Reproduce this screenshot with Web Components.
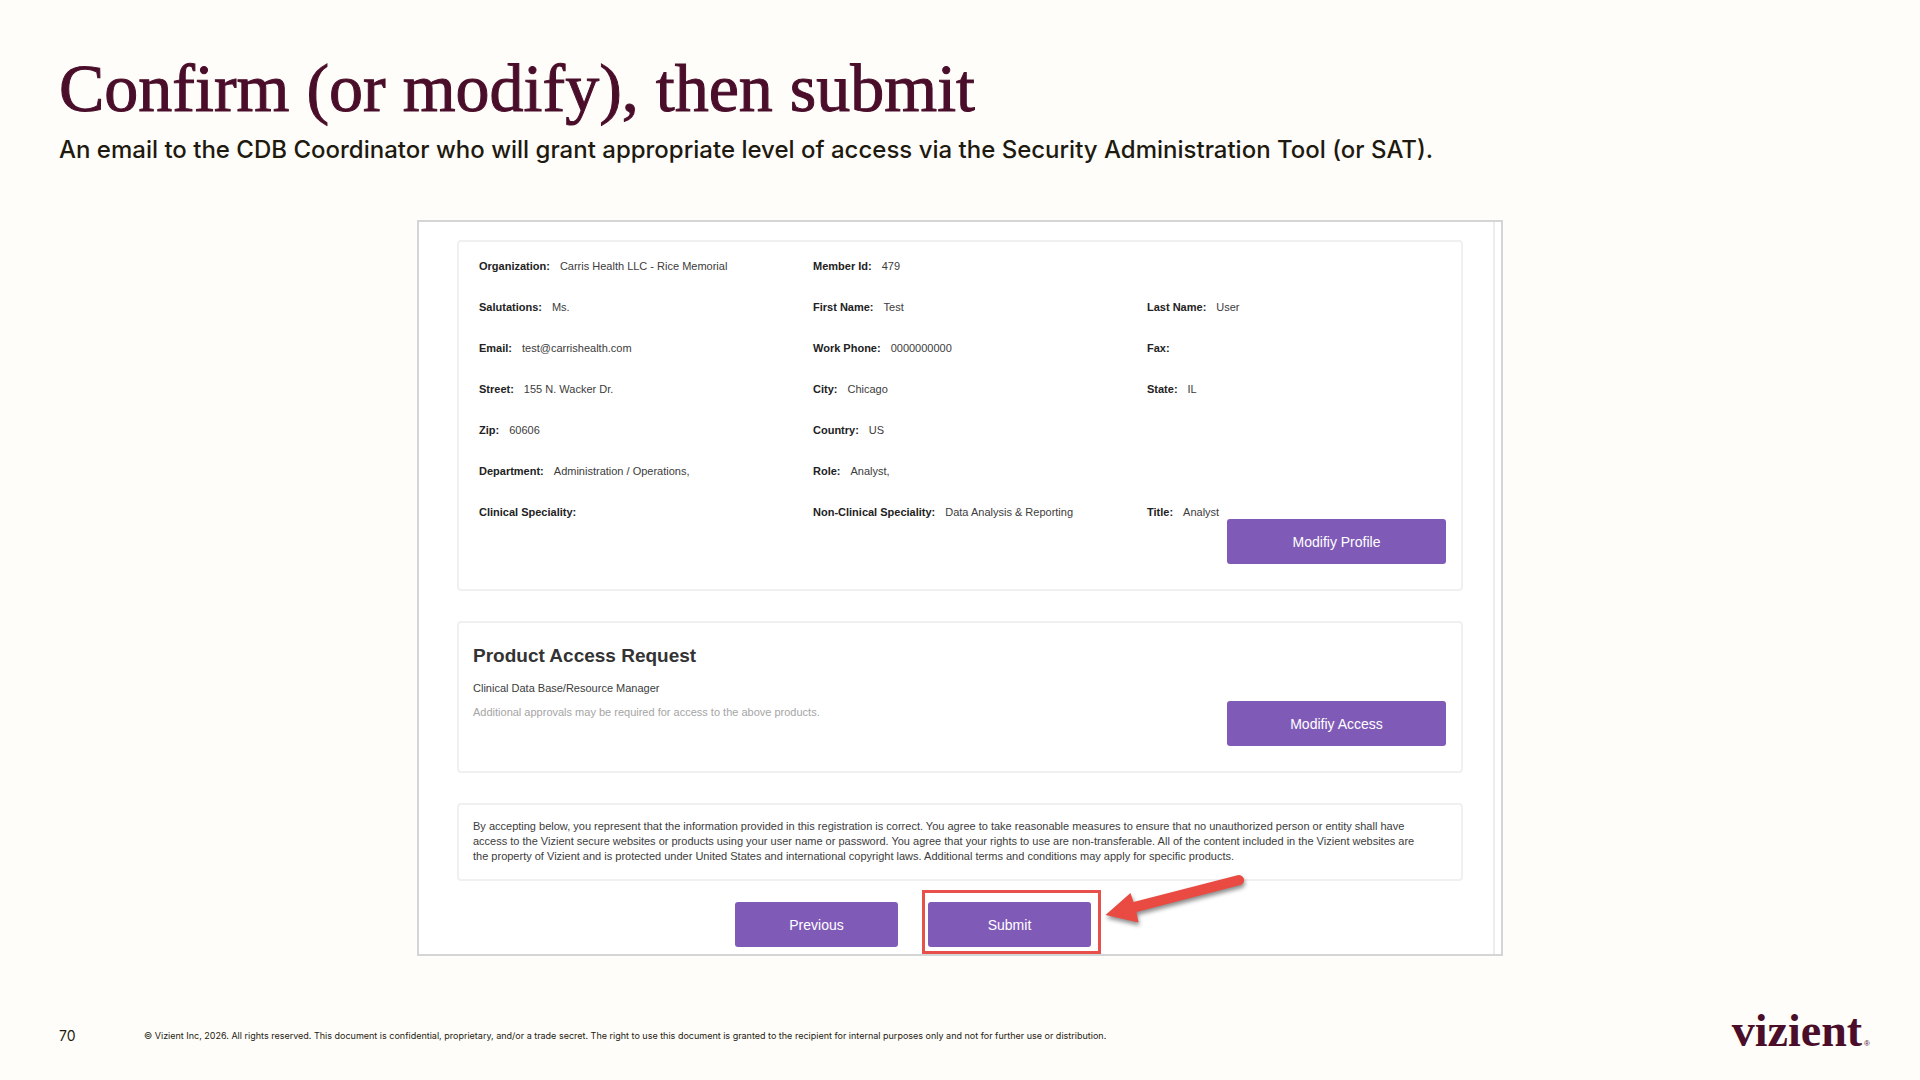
<!DOCTYPE html>
<html lang="en">
<head>
<meta charset="utf-8">
<title>Confirm (or modify), then submit</title>
<style>
    body {
        margin: 0;
        background: #fefdf9;
    }
</style>
</head>
<body>

<slide-page>
    <slide-heading slot="heading">
        Confirm (or modify), then submit
        <span slot="lead">An email to the CDB Coordinator who will grant appropriate level of access via the Security Administration Tool (or SAT).</span>
    </slide-heading>

    <registration-review></registration-review>

    <slide-footer slot="footer" page="70">© Vizient Inc, 2026. All rights reserved. This document is confidential, proprietary, and/or a trade secret. The right to use this document is granted to the recipient for internal purposes only and not for further use or distribution.</slide-footer>
</slide-page>

<script>
class baseElement extends HTMLElement {

    constructor() {
        super();

        this.attachShadow({ mode: 'open' });
    }
    connectedCallback() {
        this.render();
    }
    render() {
        this.shadowRoot.innerHTML = this.getTemplate() + this.getStyles();
    }
}

class slidePage extends baseElement {

    getTemplate() {
        return `
            <slot name="heading"></slot>
            <main><slot></slot></main>
            <slot name="footer"></slot>
        `;
    }
    getStyles() {
        return `
            <style>
                :host {
                    display: flex;
                    flex-direction: column;
                    box-sizing: border-box;
                    min-height: 100vh;
                    padding: 48px 50px 24px 59px;
                    font-family: Inter, sans-serif;
                    color: #1e1a10;
                }
                main {
                    display: flex;
                    justify-content: center;
                    margin: 52px 0 auto;
                    padding-right: 9px;
                }
            </style>
        `;
    }
}

class slideHeading extends baseElement {

    getTemplate() {
        return `
            <header>
                <h1><slot></slot></h1>
                <p><slot name="lead"></slot></p>
            </header>
        `;
    }
    getStyles() {
        return `
            <style>
                :host {
                    display: block;
                }
                h1 {
                    margin: 0;
                    font: 400 68px/80px "Liberation Serif", serif;
                    color: #4a0e2a;
                    -webkit-text-stroke: 1px #4a0e2a;
                }
                p {
                    margin: 4px 0 0;
                    font-size: 24px;
                    font-weight: 500;
                    line-height: 36px;
                }
            </style>
        `;
    }
}

class slideFooter extends baseElement {

    getTemplate() {
        return `
            <footer>
                <span class="page">${this.getAttribute('page')}</span>
                <small><slot></slot></small>
                <vizient-logo></vizient-logo>
            </footer>
        `;
    }
    getStyles() {
        return `
            <style>
                :host {
                    display: block;
                }
                footer {
                    display: flex;
                    align-items: center;
                }
                .page, small {
                    padding-top: 8px;
                }
                .page {
                    width: 85px;
                    font-size: 14px;
                }
                small {
                    flex: 1;
                    font-size: 9px;
                }
            </style>
        `;
    }
}

class vizientLogo extends baseElement {

    getTemplate() {
        return `<b>vizient</b><span>®</span>`;
    }
    getStyles() {
        return `
            <style>
                :host {
                    display: flex;
                    align-items: baseline;
                    gap: 2px;
                    color: #4a0e2a;
                }
                b {
                    font: 700 46px/50px "Liberation Serif", serif;
                }
                span {
                    font: 8px "Liberation Sans", Arial, sans-serif;
                }
            </style>
        `;
    }
}

class reviewCard extends baseElement {

    getTemplate() {
        return `<section><slot></slot></section>`;
    }
    getStyles() {
        return `
            <style>
                :host {
                    display: block;
                }
                section {
                    border: 2px solid #f0f0f0;
                    border-radius: 4px;
                }
            </style>
        `;
    }
}

class profileField extends baseElement {

    getTemplate() {
        return `<b>${this.getAttribute('label')}:</b><span><slot></slot></span>`;
    }
    getStyles() {
        return `
            <style>
                :host {
                    display: flex;
                    gap: 10px;
                    padding-left: 20px;
                    font-size: 11px;
                    line-height: 14px;
                    white-space: nowrap;
                }
                b {
                    color: #222;
                }
            </style>
        `;
    }
}

class purpleButton extends baseElement {

    getTemplate() {
        return `<button type="button"><slot></slot></button>`;
    }
    getStyles() {
        return `
            <style>
                :host {
                    display: block;
                    width: 163px;
                }
                :host([wide]) {
                    width: 219px;
                }
                button {
                    width: 100%;
                    height: 45px;
                    padding: 0;
                    border: 0;
                    border-radius: 3px;
                    background: #7f5bb7;
                    color: #fff;
                    font: 14px "Liberation Sans", Arial, sans-serif;
                    cursor: pointer;
                }
                button:hover {
                    background: #6d4aa5;
                }
            </style>
        `;
    }
}

// Red box and arrow drawn over whatever is passed in
class calloutMark extends baseElement {

    getTemplate() {
        return `
            <slot></slot>
            <div class="box"></div>
            <svg width="150" height="64" viewBox="0 0 150 64" aria-hidden="true">
                <path d="M4.500 45L29.500 23L32.500 32L136.500 5.300A5 5 0 0 1 139.500 15L35.500 42L37.500 52.500Z" fill="#e94b43"/>
            </svg>
        `;
    }
    getStyles() {
        return `
            <style>
                :host {
                    display: block;
                    position: relative;
                }
                .box {
                    position: absolute;
                    inset: -12px -10px -7px -6px;
                    border: 3px solid #e8504b;
                    pointer-events: none;
                }
                svg {
                    position: absolute;
                    left: calc(100% + 10px);
                    top: -32px;
                    filter: drop-shadow(1px 3px 2px rgba(0, 0, 0, .45));
                    pointer-events: none;
                }
            </style>
        `;
    }
}

class registrationReview extends baseElement {

    getTemplate() {
        return `
            <div class="content">
                <review-card>
                    <div class="fields">
                        <profile-field label="Organization">Carris Health LLC - Rice Memorial</profile-field>
                        <profile-field label="Member Id">479</profile-field>
                        <i></i>
                        <profile-field label="Salutations">Ms.</profile-field>
                        <profile-field label="First Name">Test</profile-field>
                        <profile-field label="Last Name">User</profile-field>
                        <profile-field label="Email">test@carrishealth.com</profile-field>
                        <profile-field label="Work Phone">0000000000</profile-field>
                        <profile-field label="Fax"></profile-field>
                        <profile-field label="Street">155 N. Wacker Dr.</profile-field>
                        <profile-field label="City">Chicago</profile-field>
                        <profile-field label="State">IL</profile-field>
                        <profile-field label="Zip">60606</profile-field>
                        <profile-field label="Country">US</profile-field>
                        <i></i>
                        <profile-field label="Department">Administration / Operations,</profile-field>
                        <profile-field label="Role">Analyst,</profile-field>
                        <i></i>
                        <profile-field label="Clinical Speciality"></profile-field>
                        <profile-field label="Non-Clinical Speciality">Data Analysis &amp; Reporting</profile-field>
                        <profile-field label="Title">Analyst</profile-field>
                    </div>
                    <div class="actions"><purple-button wide>Modifiy Profile</purple-button></div>
                </review-card>

                <review-card>
                    <div class="access">
                        <div>
                            <h2>Product Access Request</h2>
                            <p>Clinical Data Base/Resource Manager</p>
                            <p class="note">Additional approvals may be required for access to the above products.</p>
                        </div>
                        <purple-button wide>Modifiy Access</purple-button>
                    </div>
                </review-card>

                <review-card>
                    <p class="terms">By accepting below, you represent that the information provided in this registration is correct. You agree to take reasonable measures to ensure that no unauthorized person or entity shall have access to the Vizient secure websites or products using your user name or password. You agree that your rights to use are non-transferable. All of the content included in the Vizient websites are the property of Vizient and is protected under United States and international copyright laws. Additional terms and conditions may apply for specific products.</p>
                </review-card>

                <div class="buttons">
                    <purple-button>Previous</purple-button>
                    <callout-mark><purple-button>Submit</purple-button></callout-mark>
                </div>
            </div>
        `;
    }
    getStyles() {
        return `
            <style>
                :host {
                    display: block;
                    box-sizing: border-box;
                    width: 100%;
                    max-width: 1086px;
                    padding-right: 6px;
                    border: 2px solid #d4d6d6;
                    background: #fff;
                    color: #3c3c3c;
                    font-family: "Liberation Sans", Arial, sans-serif;
                    font-size: 11px;
                }
                .content {
                    display: flex;
                    flex-direction: column;
                    gap: 30px;
                    padding: 18px 30px 7px 38px;
                    border-right: 2px solid #ececec;
                }
                .fields {
                    display: grid;
                    grid-template-columns: repeat(3, 1fr);
                    row-gap: 27px;
                    padding-top: 17px;
                }
                .actions {
                    display: flex;
                    justify-content: flex-end;
                    padding: 0 15px 25px;
                }
                .access {
                    display: flex;
                    justify-content: space-between;
                    align-items: flex-end;
                    padding: 21px 15px 25px 14px;
                }
                .access > div {
                    min-height: 102px;
                }
                h2 {
                    margin: 0 0 12px;
                    font-size: 19px;
                    line-height: 24px;
                    color: #333;
                }
                p {
                    margin: 0;
                    line-height: 16px;
                }
                .note {
                    margin-top: 8px;
                    color: #a5a5a5;
                }
                .terms {
                    padding: 14px 35px 15px 14px;
                    line-height: 15px;
                }
                .buttons {
                    display: flex;
                    justify-content: center;
                    gap: 30px;
                    margin-top: -9px;
                    padding-right: 94px;
                }
            </style>
        `;
    }
}

customElements.define('slide-page', slidePage);
customElements.define('slide-heading', slideHeading);
customElements.define('slide-footer', slideFooter);
customElements.define('vizient-logo', vizientLogo);
customElements.define('review-card', reviewCard);
customElements.define('profile-field', profileField);
customElements.define('purple-button', purpleButton);
customElements.define('callout-mark', calloutMark);
customElements.define('registration-review', registrationReview);
</script>
</body>
</html>
